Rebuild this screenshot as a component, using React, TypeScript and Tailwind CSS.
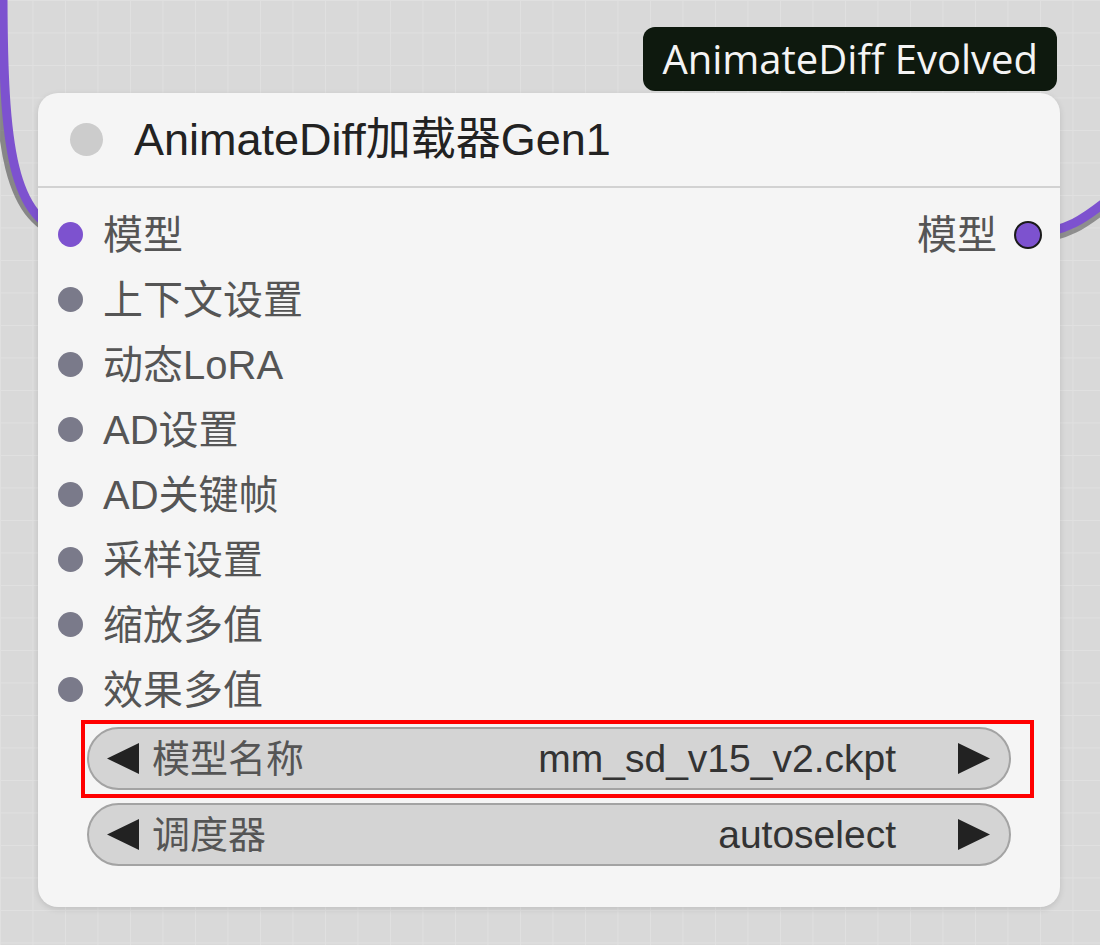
import React from "react";

const inputs = ["模型", "上下文设置", "动态LoRA", "AD设置", "AD关键帧", "采样设置", "缩放多值", "效果多值"];

const widgets = [
  { label: "模型名称", value: "mm_sd_v15_v2.ckpt", highlight: true },
  { label: "调度器", value: "autoselect", highlight: false },
];

function ArrowLeft() {
  return (
    <svg width="32" height="31" viewBox="0 0 32 31" className="shrink-0">
      <polygon points="0,15.5 32,0 32,31" fill="#222222" />
    </svg>
  );
}

function ArrowRight() {
  return (
    <svg width="32" height="31" viewBox="0 0 32 31" className="shrink-0">
      <polygon points="32,15.5 0,0 0,31" fill="#222222" />
    </svg>
  );
}

export default function App() {
  return (
    <div className="relative w-[1100px] h-[945px] overflow-hidden bg-[#d9d9d9] bg-[linear-gradient(to_right,#e0e0e0_1px,transparent_1px),linear-gradient(to_bottom,#e0e0e0_1px,transparent_1px)] bg-[size:32.5px_32.5px] font-['Liberation_Sans','Noto_Sans_CJK_SC',sans-serif]">
      {/* links */}
      <svg className="absolute inset-0" width="1100" height="945" viewBox="0 0 1100 945">
        <path d="M -1 -10 C -1 150, 8 222, 70 236" fill="none" stroke="#444" strokeOpacity="0.55" strokeWidth="12" />
        <path d="M 3 -10 C 3 150, 12 220, 70 235" fill="none" stroke="#7d52cf" strokeWidth="9" />
        <path d="M 1028 238 C 1065 237, 1085 223, 1115 198" fill="none" stroke="#444" strokeOpacity="0.5" strokeWidth="12" />
        <path d="M 1028 234 C 1065 233, 1085 219, 1115 194" fill="none" stroke="#7d52cf" strokeWidth="9" />
      </svg>

      <div className="relative flex flex-col w-[1060px] pl-[38px] pt-[27px]">
        {/* Badge */}
        <div className="self-end mr-[3px] h-[64px] px-[19px] rounded-[12px] bg-[#0e190e] flex items-center">
          <span className="text-[#f4f4f4] text-[40px] leading-none font-['Open_Sans',sans-serif]">AnimateDiff Evolved</span>
        </div>

        {/* Node */}
        <div className="mt-[2px] w-[1022px] h-[814px] rounded-[20px] bg-[#f5f5f5] shadow-[0_2px_6px_rgba(0,0,0,0.12)] flex flex-col">
          <div className="h-[95px] flex items-center pl-[32px] border-b-2 border-[#d2d2d2]">
            <div className="w-[33px] h-[33px] rounded-full bg-[#cccccc]" />
            <span className="ml-[31px] text-[45px] leading-none text-[#222222]">AnimateDiff加载器Gen1</span>
          </div>

          <div className="pt-[14px] flex flex-col">
            {inputs.map((name, i) => (
              <div key={name} className="h-[65px] flex items-center justify-between pl-[20px] pr-[18px]">
                <div className="flex items-center">
                  <div className={`w-[25px] h-[25px] rounded-full ${i === 0 ? "bg-[#7d52cf]" : "bg-[#7a7a8a]"}`} />
                  <span className="ml-[20px] text-[40px] leading-none text-[#555555]">{name}</span>
                </div>
                {i === 0 && (
                  <div className="flex items-center">
                    <span className="text-[40px] leading-none text-[#555555]">模型</span>
                    <div className="ml-[17px] w-[28px] h-[28px] rounded-full bg-[#7d52cf] border-2 border-[#1a1a1a]" />
                  </div>
                )}
              </div>
            ))}
          </div>

          {/* Widgets */}
          <div className="mt-[5px] px-[49px] flex flex-col gap-[13px]">
            {widgets.map((w) => (
              <div key={w.label} className="relative">
                <div className="h-[63px] rounded-full border-2 border-[#a3a3a3] bg-[#d4d4d4] flex items-center pl-[18px] pr-[19px]">
                  <ArrowLeft />
                  <span className="ml-[13px] flex-1 text-[38px] leading-none text-[#555555]">{w.label}</span>
                  <span className="text-[39px] leading-none text-[#333333]">{w.value}</span>
                  <div className="ml-[62px]">
                    <ArrowRight />
                  </div>
                </div>
                {w.highlight && (
                  <div className="absolute left-[-6px] right-[-23px] top-[-7px] bottom-[-8px] border-4 border-[#ff0000]" />
                )}
              </div>
            ))}
          </div>
        </div>
      </div>
    </div>
  );
}
